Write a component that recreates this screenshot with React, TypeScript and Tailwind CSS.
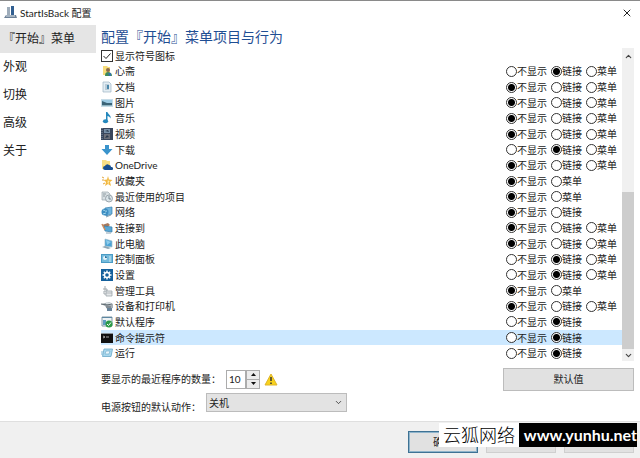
import type { ReactNode } from "react";
import { ChevronDown, ChevronUp, X } from "lucide-react";

type Choice = "不显示" | "链接" | "菜单";

interface Item {
  name: string;
  icon: ReactNode;
  choices: Choice[];
  value: Choice;
  active?: boolean;
}

const ALL: Choice[] = ["不显示", "链接", "菜单"];
const LINK: Choice[] = ["不显示", "链接"];
const MENU: Choice[] = ["不显示", "菜单"];

const TABS = ["『开始』菜单", "外观", "切换", "高级", "关于"];

const RADIO =
  "size-[11px] shrink-0 appearance-none rounded-full border border-[#333] bg-white checked:bg-[radial-gradient(circle,#000_3px,#fff_4px)]";

const ITEMS: Item[] = [
  {
    name: "心斋",
    choices: ALL,
    value: "链接",
    icon: (
      <>
        <path d="M2 1h4l1 1h2v8H2z" fill="#f7dc7a" />
        <circle cx="7" cy="5" r="2" fill="#8a6a4d" />
        <path d="M4 11c0-3 1-4 3-4s4 1 4 4z" fill="#3f8a5a" />
        <path d="M7 8h3v3H8z" fill="#3473a8" />
      </>
    ),
  },
  {
    name: "文档",
    choices: ALL,
    value: "不显示",
    icon: (
      <>
        <path d="M2 1h6l2 2v8H2z" fill="#e3edf3" stroke="#9fb6c4" strokeWidth=".7" />
        <path d="M4 4h4M4 6h4M4 8h4" stroke="#7f9db0" strokeWidth=".8" />
        <path d="M6 4h2v4H6z" fill="#4b87aa" />
      </>
    ),
  },
  {
    name: "图片",
    choices: ALL,
    value: "不显示",
    icon: (
      <>
        <path d="M0 2h12v8H0z" fill="#c6dce8" />
        <path d="M1 3h10v3H1z" fill="#9ccbe4" />
        <path d="M1 4l5 2h5v2H1z" fill="#3b6478" />
        <path d="M1 8h10v1H1z" fill="#8fb4c0" />
      </>
    ),
  },
  {
    name: "音乐",
    choices: ALL,
    value: "不显示",
    icon: (
      <>
        <path d="M5 0h1.500c0 2 4 3 3 6.500C9 5 7.500 4 6.500 4v5H5z" fill="#2488bd" />
        <ellipse cx="4.500" cy="9.300" rx="2.600" ry="2" fill="#2488bd" />
      </>
    ),
  },
  {
    name: "视频",
    choices: ALL,
    value: "不显示",
    icon: (
      <>
        <path d="M0 0h12v12H0z" fill="#39465c" />
        <path d="M3 1h6v4H3z" fill="#7790a8" />
        <path d="M3 6h6v5H3z" fill="#6c6f79" />
        <path d="M4 3l3-1 1 2zM4 10l2-3 2 2z" fill="#28384d" />
        <path d="M1 0v12" stroke="#8593a5" strokeDasharray="1 1" />
      </>
    ),
  },
  {
    name: "下载",
    choices: ALL,
    value: "链接",
    icon: <path d="M4 1h4v4h3.500L6 11 .500 5H4z" fill="#3a94cc" />,
  },
  {
    name: "OneDrive",
    choices: ALL,
    value: "不显示",
    icon: (
      <>
        <path d="M1 1h4l1 1h3v8H1z" fill="#f8df86" />
        <path d="M4 11a2 2 0 0 1 0-4 2.500 2.500 0 0 1 4-1 2 2 0 0 1 2 2 1.500 1.500 0 0 1 1 3z" fill="#174f91" />
      </>
    ),
  },
  {
    name: "收藏夹",
    choices: MENU,
    value: "不显示",
    icon: (
      <>
        <path d="M7 1l1 3.500 3.500.500-2.500 2 1 4-3-2-3 2 1-4-2.500-2 3.500-.500z" fill="#f2b840" />
        <path d="M1 2l2 1M1 5h2M2 9l2-1" stroke="#e3a53a" />
        <path d="M7 4l.500 2 1.500.500-1.500.500.500 2-1.500-1" fill="#fff0b8" />
      </>
    ),
  },
  {
    name: "最近使用的项目",
    choices: MENU,
    value: "不显示",
    icon: (
      <>
        <path d="M1 1h6l2 2v6H1z" fill="#d8dfe3" stroke="#9ba6ad" strokeWidth=".7" />
        <circle cx="8" cy="7.500" r="3.500" fill="#d9e4e9" stroke="#8b969d" strokeWidth=".8" />
        <path d="M8 5v3h2" fill="none" stroke="#64737d" strokeWidth=".8" />
        <path d="M2 3h3M2 5h2" stroke="#7d8b93" strokeWidth=".8" />
      </>
    ),
  },
  {
    name: "网络",
    choices: LINK,
    value: "不显示",
    icon: (
      <>
        <path d="M4 2l7-1v7l-6 2z" fill="#6fb5df" stroke="#347ba9" strokeWidth=".7" />
        <circle cx="4" cy="6" r="3.500" fill="#3d8ec2" />
        <path d="M2 4c2 0 2 2 4 1M2 8l3-1" stroke="#a4d6ec" fill="none" />
        <path d="M5 11l5-2" stroke="#8aa3b3" />
      </>
    ),
  },
  {
    name: "连接到",
    choices: ALL,
    value: "不显示",
    icon: (
      <>
        <path d="M1 3l6-2 2 2-5 4z" fill="#a8795c" />
        <path d="M3 4l8 1v5l-7-1z" fill="#58a7d5" stroke="#347ba9" strokeWidth=".7" />
        <path d="M1 2l3 6" stroke="#c98d61" strokeWidth="1.500" />
        <path d="M5 11h5" stroke="#8aa3b3" />
      </>
    ),
  },
  {
    name: "此电脑",
    choices: ALL,
    value: "不显示",
    icon: (
      <>
        <path d="M4 1l7 2v6L4 8z" fill="#4aa3d6" stroke="#9bbccc" strokeWidth=".7" />
        <path d="M5 2l5 2-4 3z" fill="#8fcdec" />
        <path d="M1 9l3-1 6 2-3 1z" fill="#8ea6b4" />
      </>
    ),
  },
  {
    name: "控制面板",
    choices: ALL,
    value: "链接",
    icon: (
      <>
        <path d="M0 1h12v9H0z" fill="#4a9bc5" />
        <path d="M1 2h10v7H1z" fill="#74bbdc" />
        <circle cx="4" cy="5" r="2" fill="#e6f3f8" />
        <path d="M4 5V3a2 2 0 0 1 2 2z" fill="#28719f" />
        <path d="M8 4h2M8 6h2M8 8h2" stroke="#e6f3f8" strokeWidth=".8" />
      </>
    ),
  },
  {
    name: "设置",
    choices: ALL,
    value: "链接",
    icon: (
      <>
        <path d="M0 0h12v12H0z" fill="#14609c" />
        <circle cx="6" cy="6" r="2.500" fill="none" stroke="#fff" strokeWidth="1.400" />
        <path d="M6 1.500V3M6 9v1.500M1.500 6H3M9 6h1.500M2.800 2.800l1 1M8.200 8.200l1 1M9.200 2.800l-1 1M3.800 8.200l-1 1" stroke="#fff" strokeWidth="1.400" />
      </>
    ),
  },
  {
    name: "管理工具",
    choices: MENU,
    value: "不显示",
    icon: (
      <>
        <path d="M4 1v4M2 4h4v2H3v3h3" fill="none" stroke="#a1a9ae" />
        <path d="M5 6h6v5H5z" fill="#e5e8ea" stroke="#9da5aa" strokeWidth=".8" />
        <path d="M5 8h6" stroke="#9da5aa" strokeWidth=".7" />
      </>
    ),
  },
  {
    name: "设备和打印机",
    choices: ALL,
    value: "不显示",
    icon: (
      <>
        <path d="M0 4l8-2 4 2v4l-6 1-2-3z" fill="#a8b0b5" />
        <path d="M5 2l6 1v2L5 4z" fill="#d9dfe2" />
        <path d="M0 4l6 1 5-1M5 7h5" stroke="#5e6970" fill="none" />
        <path d="M6 8h5v3H6z" fill="#68839a" />
      </>
    ),
  },
  {
    name: "默认程序",
    choices: LINK,
    value: "链接",
    icon: (
      <>
        <path d="M1 1h10v9H1z" fill="#eef3f5" stroke="#8298a5" />
        <path d="M1 1h10v1H1z" fill="#5d87a2" />
        <path d="M2 4h3v5H2z" fill="#5f9cc2" />
        <circle cx="8" cy="8" r="3.500" fill="#2c9b47" />
        <path d="M6 8l1.500 1.500L10 6.500" fill="none" stroke="#fff" />
      </>
    ),
  },
  {
    name: "命令提示符",
    choices: LINK,
    value: "链接",
    active: true,
    icon: (
      <>
        <path d="M0 1h12v10H0z" fill="#111" />
        <path d="M0 1h12v1H0z" fill="#8a9297" />
        <path d="M2 4l2 1-2 1M5 5h3" stroke="#ccc" fill="none" strokeWidth=".8" />
      </>
    ),
  },
  {
    name: "运行",
    choices: LINK,
    value: "链接",
    icon: (
      <>
        <path d="M3 2h8.500L10 9.500H1.500z" fill="#a8d7ed" stroke="#6aa8c8" strokeWidth=".8" />
        <path d="M5 4h4l-1 3H4z" fill="#e8f5fb" stroke="#6aa8c8" strokeWidth=".6" />
        <path d="M0 5h2M0 7h2" stroke="#79b7d5" />
      </>
    ),
  },
];

function ItemRow({ item }: { item: Item }) {
  return (
    <li className={`flex items-center ${item.active ? "bg-[#cce8ff]" : ""}`}>
      <svg viewBox="0 0 12 12" className="size-3 shrink-0" aria-hidden="true">
        {item.icon}
      </svg>
      <span className="ml-0.5 flex-1">{item.name}</span>
      <div role="radiogroup" aria-label={item.name} className="flex w-[116px] gap-1">
        {item.choices.map((c) => (
          <label key={c} className="flex items-center whitespace-nowrap">
            <input type="radio" name={item.name} defaultChecked={c === item.value} className={RADIO} />
            {c}
          </label>
        ))}
      </div>
    </li>
  );
}

function ScrollBar() {
  return (
    <div className="flex w-3 shrink-0 flex-col bg-[#f0f0f0] text-[#444]">
      <button aria-label="向上滚动" className="flex h-4 items-center justify-center">
        <ChevronUp size={9} strokeWidth={3} />
      </button>
      <div className="flex-1" />
      <div className="h-[157px] bg-[#cdcdcd]" />
      <button aria-label="向下滚动" className="flex h-3 items-center justify-center">
        <ChevronDown size={9} strokeWidth={3} />
      </button>
    </div>
  );
}

export default function App() {
  return (
    <div className="flex min-h-screen flex-col border-t border-[#8a8a8a] bg-white font-[Lato,'Noto_Sans_CJK_SC',sans-serif] text-[10px] leading-none text-[#222]">
      <header className="flex h-6 items-center pr-[7px] pl-1">
        <svg viewBox="0 0 14 14" className="size-3.5" aria-hidden="true">
          <path d="M3 1h3v9H3z" fill="#9eacba" />
          <path d="M7 0h3v10H7z" fill="#315f91" />
          <path d="M2 9h10l1 3H0z" fill="#6d8197" />
          <path d="M2 10h9" stroke="#dce5eb" />
        </svg>
        <h1 className="ml-0.5 flex-1">StartIsBack 配置</h1>
        <button aria-label="关闭">
          <X size={12} strokeWidth={2} />
        </button>
      </header>

      <div className="flex flex-1">
        <nav className="flex w-24 shrink-0 flex-col text-xs">
          {TABS.map((tab, i) => (
            <button key={tab} className={`h-7 pl-[3px] text-left ${i === 0 ? "bg-[#e5e5e5]" : ""}`}>
              {tab}
            </button>
          ))}
        </nav>

        <main className="flex min-w-0 flex-1 flex-col pr-1.5 pl-[5px]">
          <h2 className="flex h-[23px] items-center text-sm leading-none text-[#1f4e93]">配置『开始』菜单项目与行为</h2>

          <div className="flex h-[313px]">
            <ul className="grid flex-1 auto-rows-fr">
              <li className="flex items-center">
                <label className="flex items-center gap-0.5">
                  <span className="grid place-items-center">
                    <input
                      type="checkbox"
                      defaultChecked
                      className="col-start-1 row-start-1 size-3 appearance-none border border-[#333] bg-white"
                    />
                    <svg viewBox="0 0 12 12" className="pointer-events-none col-start-1 row-start-1 size-3">
                      <path d="M2.500 6l2.500 2.500 4.500-5" fill="none" stroke="#222" />
                    </svg>
                  </span>
                  显示符号图标
                </label>
              </li>
              {ITEMS.map((item) => (
                <ItemRow key={item.name} item={item} />
              ))}
            </ul>
            <ScrollBar />
          </div>

          <div className="mt-1.5 flex h-6 items-center">
            <label htmlFor="recent" className="w-[125px] whitespace-nowrap">
              要显示的最近程序的数量：
            </label>
            <div className="flex h-[19px]">
              <input
                id="recent"
                defaultValue="10"
                className="w-5 border border-[#acacac] bg-white pl-0.5"
              />
              <div className="flex w-3.5 flex-col border border-[#acacac] bg-[#ececec]">
                <button aria-label="增加" className="flex flex-1 items-center justify-center border-b border-[#acacac]">
                  <svg viewBox="0 0 5 3" className="w-[5px]"><path d="M0 3h5L2.500 0z" fill="#111" /></svg>
                </button>
                <button aria-label="减少" className="flex flex-1 items-center justify-center">
                  <svg viewBox="0 0 5 3" className="w-[5px]"><path d="M0 0h5L2.500 3z" fill="#111" /></svg>
                </button>
              </div>
            </div>
            <svg viewBox="0 0 14 13" className="ml-1 w-3.5" aria-hidden="true">
              <path d="M7 1l6 11H1z" fill="#f8d21c" stroke="#dfb52b" strokeLinejoin="round" />
              <path d="M7 4v4M7 9.500V11" stroke="#333" strokeWidth="1.500" />
            </svg>
            <button className="ml-auto h-[23px] w-[131px] border border-[#bcbcbc] bg-[#e1e1e1]">默认值</button>
          </div>

          <div className="mt-0.5 flex items-end pb-2">
            <label htmlFor="power" className="w-[105px] whitespace-nowrap">
              电源按钮的默认动作：
            </label>
            <div className="grid items-center">
              <select
                id="power"
                className="col-start-1 row-start-1 h-[19px] w-[141px] appearance-none border border-[#bcbcbc] bg-[#e3e3e3] pl-0.5 leading-none"
              >
                <option>关机</option>
              </select>
              <ChevronDown size={9} className="pointer-events-none col-start-1 row-start-1 mr-1 justify-self-end" />
            </div>
          </div>
        </main>
      </div>

      <footer className="relative flex h-[37px] items-center justify-end gap-2 border-t border-[#dfdfdf] bg-[#f0f0f0] pt-1 pr-1.5">
        <button className="h-[22px] w-[70px] border border-[#3e7294] bg-[#e1e1e1] outline outline-[#8fb4cb] -outline-offset-2">
          确定
        </button>
        <button aria-label="取消" className="h-[22px] w-[70px] border border-[#cfcfcf] bg-[#e1e1e1]" />
        <button aria-label="应用" className="h-[22px] w-[70px] border border-[#cfcfcf] bg-[#e1e1e1]" />
        <div className="absolute top-px right-[3px] flex h-6 items-stretch text-black">
          <span className="flex w-20 items-center justify-center bg-white text-lg leading-none font-light">云狐网络</span>
          <span className="flex w-[118px] items-center justify-end bg-black text-base leading-none font-bold text-white">
            www.yunhu.net
          </span>
        </div>
      </footer>
    </div>
  );
}
